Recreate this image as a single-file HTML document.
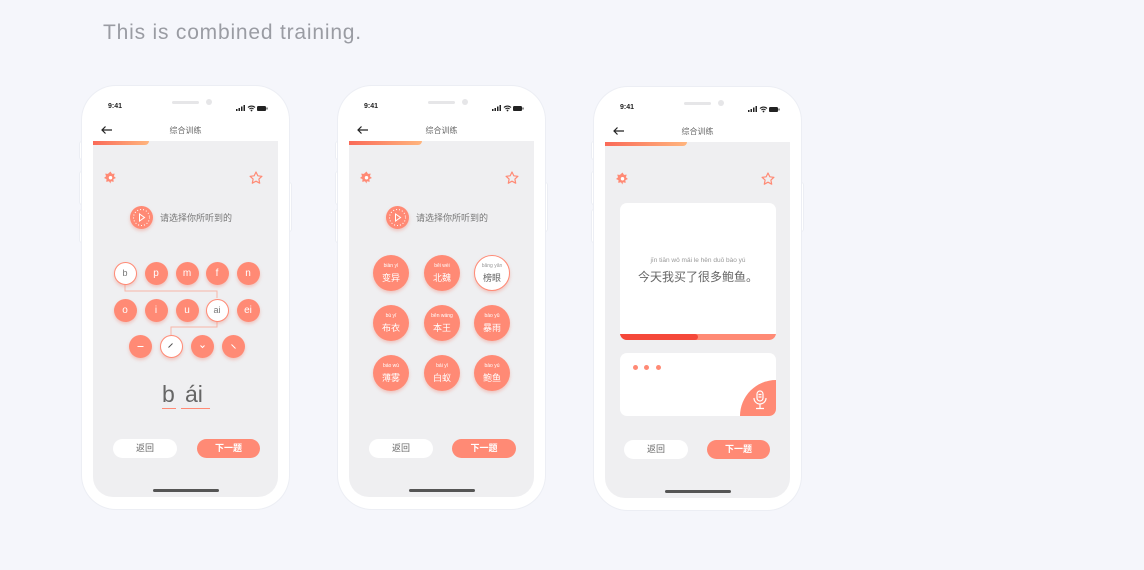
<!DOCTYPE html>
<html><head><meta charset="utf-8"><style>
*{margin:0;padding:0;box-sizing:border-box}
body{width:1144px;height:570px;background:#f5f6fb;font-family:"Liberation Sans","Noto Sans CJK SC",sans-serif;position:relative;overflow:hidden}
.h{position:absolute;left:103px;top:21px;font-size:21px;color:#9a9ca3;letter-spacing:.8px}
.ph{position:absolute;top:86px;width:207px;height:423px;background:#fff;border-radius:34px;box-shadow:0 0 0 1px #eceef4}
.sb{position:absolute;background:#fff;border-radius:2px;box-shadow:0 0 0 1px #eceef4}
.ph *{position:absolute}
.scr{left:11px;top:55px;width:185px;height:356px;background:#efeff1;border-radius:0 0 20px 20px;overflow:hidden}
.t{left:26px;top:17px;font-size:7px;font-weight:bold;color:#222}
.pill{left:90px;top:15px;width:27px;height:3px;border-radius:2px;background:#e6e6e8}
.dot{left:124px;top:13px;width:6px;height:6px;border-radius:3px;background:#e6e6e8}
.title{left:0;width:207px;text-align:center;top:39px;font-size:8px;color:#666}
.prog{left:0;top:0;width:56px;height:4px;border-radius:0 0 4px 0;background:linear-gradient(90deg,#fa6a58,#ffb57e)}
.c{border-radius:50%;background:#ff8a75;color:#fff;text-align:center;box-shadow:0 2px 3px rgba(240,120,100,.35)}
.s{width:23px;height:23px;font-size:10px;line-height:23px}
.c.w{background:#fff;color:#777;border:1.5px solid #ff8a75}
.s.w{line-height:20px;font-size:9px}
.btn{height:19px;border-radius:10px;font-size:9px;text-align:center;line-height:19px}
.home{left:71px;top:403px;width:66px;height:2.5px;border-radius:2px;background:#555}
.py{left:0;width:100%;top:8px;font-size:5px}
.hz{left:0;width:100%;top:16px;font-size:9px}
</style></head><body>
<div class="h">This is combined training.</div>

<div class="sb" style="left:80px;top:142px;width:4px;height:17px"></div>
<div class="sb" style="left:80px;top:172px;width:4px;height:32px"></div>
<div class="sb" style="left:80px;top:210px;width:4px;height:32px"></div>
<div class="sb" style="left:287px;top:183px;width:4px;height:48px"></div>
<div class="sb" style="left:336px;top:142px;width:4px;height:17px"></div>
<div class="sb" style="left:336px;top:172px;width:4px;height:32px"></div>
<div class="sb" style="left:336px;top:210px;width:4px;height:32px"></div>
<div class="sb" style="left:543px;top:183px;width:4px;height:48px"></div>
<div class="sb" style="left:592px;top:142px;width:4px;height:17px"></div>
<div class="sb" style="left:592px;top:172px;width:4px;height:32px"></div>
<div class="sb" style="left:592px;top:210px;width:4px;height:32px"></div>
<div class="sb" style="left:799px;top:183px;width:4px;height:48px"></div>

<!-- PHONE 1 -->
<div class="ph" style="left:82px">
<div class="t">9:41</div><div class="pill"></div><div class="dot"></div>
<svg style="left:154px;top:18px" width="33" height="8" viewBox="0 0 33 8"><rect x="0" y="5" width="1.5" height="2" fill="#222"/><rect x="2.5" y="4" width="1.5" height="3" fill="#222"/><rect x="5" y="2.5" width="1.5" height="4.5" fill="#222"/><rect x="7.5" y="1" width="1.5" height="6" fill="#222"/><path d="M12 3.5a5 5 0 0 1 7 0M13.5 5a3 3 0 0 1 4 0" stroke="#222" stroke-width="1.2" fill="none"/><circle cx="15.5" cy="6.5" r=".9" fill="#222"/><rect x="21" y="2" width="9" height="5" rx="1.3" fill="#222"/><rect x="30.5" y="3.5" width="1" height="2" fill="#222"/></svg>
<svg style="left:19px;top:40px" width="11" height="8"><path d="M1 4h10M4.5 .5L1 4l3.5 3.5" stroke="#222" stroke-width="1.2" fill="none"/></svg>
<div class="title">综合训练</div>
<div class="scr">
<div class="prog"></div>
<svg style="left:11px;top:30px" width="13" height="13" viewBox="0 0 12 12"><path d="M6 0.5l1.4 2.1 2.5-.2-.8 2.4L11 6.5l-2.3 1 .2 2.5-2.5-.5L6 11.5l-1.4-2-2.5.5.2-2.5L0 6.5l1.9-1.7-.8-2.4 2.5.2z" fill="#ff8a75"/><circle cx="6" cy="6.2" r="1.6" fill="#fff"/></svg>
<svg style="left:156px;top:30px" width="14" height="14" viewBox="0 0 14 14"><path d="M7 1l1.8 3.8 4.1.5-3 2.8.8 4.1L7 10.2 3.3 12.2l.8-4.1-3-2.8 4.1-.5z" stroke="#ff8a75" stroke-width="1.2" fill="none" stroke-linejoin="round"/></svg>
<div class="c" style="left:37px;top:65px;width:23px;height:23px"></div>
<svg style="left:37px;top:65px" width="23" height="23" viewBox="0 0 23 23"><circle cx="11.5" cy="11.5" r="8" stroke="#fff" stroke-width="1" stroke-dasharray="1 2" fill="none"/><path d="M9.5 8l5 3.5-5 3.5z" stroke="#fff" fill="none"/></svg>
<div style="left:67px;top:70px;font-size:9px;color:#777;white-space:nowrap">请选择你所听到的</div>
<svg style="left:0;top:0" width="185" height="300"><path d="M32 143V150H124V157M124 180V186H78V194" stroke="#f7b6a8" stroke-width="1" fill="none"/></svg>
<div class="c s w" style="left:20.5px;top:120.5px">b</div>
<div class="c s" style="left:51.5px;top:120.5px">p</div>
<div class="c s" style="left:82.5px;top:120.5px">m</div>
<div class="c s" style="left:112.5px;top:120.5px">f</div>
<div class="c s" style="left:143.5px;top:120.5px">n</div>
<div class="c s" style="left:20.5px;top:157.5px">o</div>
<div class="c s" style="left:51.5px;top:157.5px">i</div>
<div class="c s" style="left:82.5px;top:157.5px">u</div>
<div class="c s w" style="left:112.5px;top:157.5px">ai</div>
<div class="c s" style="left:143.5px;top:157.5px">ei</div>
<div class="c s" style="left:35.5px;top:193.5px"><svg style="left:0;top:0" width="23" height="23"><path d="M8.5 11.5h6" stroke="#fff" stroke-width="1"/></svg></div>
<div class="c s w" style="left:66.5px;top:193.5px"><svg style="left:-1.5px;top:-1.5px" width="23" height="23"><path d="M9.5 13.5l4-4" stroke="#555" stroke-width="1"/></svg></div>
<div class="c s" style="left:97.5px;top:193.5px"><svg style="left:0;top:0" width="23" height="23"><path d="M9.5 10.5l2 2 2-2" stroke="#fff" stroke-width="1" fill="none"/></svg></div>
<div class="c s" style="left:128.5px;top:193.5px"><svg style="left:0;top:0" width="23" height="23"><path d="M9.5 9.5l4 4" stroke="#fff" stroke-width="1"/></svg></div>
<div style="left:69px;top:240px;font-size:23px;color:#666">b</div>
<div style="left:92px;top:240px;font-size:23px;color:#666">ái</div>
<div style="left:69px;top:267px;width:14px;height:1px;background:#ff8a75"></div>
<div style="left:88px;top:267px;width:29px;height:1px;background:#ff8a75"></div>
<div class="btn" style="left:20px;top:298px;width:64px;background:#fff;color:#666">返回</div>
<div class="btn" style="left:104px;top:298px;width:63px;background:#ff8a75;color:#fff;font-weight:bold">下一题</div>
</div>
<div class="home"></div>
</div>

<!-- PHONE 2 -->
<div class="ph" style="left:338px">
<div class="t">9:41</div><div class="pill"></div><div class="dot"></div>
<svg style="left:154px;top:18px" width="33" height="8" viewBox="0 0 33 8"><rect x="0" y="5" width="1.5" height="2" fill="#222"/><rect x="2.5" y="4" width="1.5" height="3" fill="#222"/><rect x="5" y="2.5" width="1.5" height="4.5" fill="#222"/><rect x="7.5" y="1" width="1.5" height="6" fill="#222"/><path d="M12 3.5a5 5 0 0 1 7 0M13.5 5a3 3 0 0 1 4 0" stroke="#222" stroke-width="1.2" fill="none"/><circle cx="15.5" cy="6.5" r=".9" fill="#222"/><rect x="21" y="2" width="9" height="5" rx="1.3" fill="#222"/><rect x="30.5" y="3.5" width="1" height="2" fill="#222"/></svg>
<svg style="left:19px;top:40px" width="11" height="8"><path d="M1 4h10M4.5 .5L1 4l3.5 3.5" stroke="#222" stroke-width="1.2" fill="none"/></svg>
<div class="title">综合训练</div>
<div class="scr">
<div class="prog" style="width:73px"></div>
<svg style="left:11px;top:30px" width="13" height="13" viewBox="0 0 12 12"><path d="M6 0.5l1.4 2.1 2.5-.2-.8 2.4L11 6.5l-2.3 1 .2 2.5-2.5-.5L6 11.5l-1.4-2-2.5.5.2-2.5L0 6.5l1.9-1.7-.8-2.4 2.5.2z" fill="#ff8a75"/><circle cx="6" cy="6.2" r="1.6" fill="#fff"/></svg>
<svg style="left:156px;top:30px" width="14" height="14" viewBox="0 0 14 14"><path d="M7 1l1.8 3.8 4.1.5-3 2.8.8 4.1L7 10.2 3.3 12.2l.8-4.1-3-2.8 4.1-.5z" stroke="#ff8a75" stroke-width="1.2" fill="none" stroke-linejoin="round"/></svg>
<div class="c" style="left:37px;top:65px;width:23px;height:23px"></div>
<svg style="left:37px;top:65px" width="23" height="23" viewBox="0 0 23 23"><circle cx="11.5" cy="11.5" r="8" stroke="#fff" stroke-width="1" stroke-dasharray="1 2" fill="none"/><path d="M9.5 8l5 3.5-5 3.5z" stroke="#fff" fill="none"/></svg>
<div style="left:67px;top:70px;font-size:9px;color:#777;white-space:nowrap">请选择你所听到的</div>
<div class="c" style="left:24px;top:114px;width:36px;height:36px"><div class="py">biàn yì</div><div class="hz">变异</div></div>
<div class="c" style="left:75px;top:114px;width:36px;height:36px"><div class="py">běi wèi</div><div class="hz">北魏</div></div>
<div class="c w" style="left:125px;top:114px;width:36px;height:36px"><div class="py" style="top:6.5px;color:#999">bǎng yǎn</div><div class="hz" style="top:14.5px;color:#666">榜眼</div></div>
<div class="c" style="left:24px;top:164px;width:36px;height:36px"><div class="py">bù yī</div><div class="hz">布衣</div></div>
<div class="c" style="left:75px;top:164px;width:36px;height:36px"><div class="py">běn wáng</div><div class="hz">本王</div></div>
<div class="c" style="left:125px;top:164px;width:36px;height:36px"><div class="py">bào yǔ</div><div class="hz">暴雨</div></div>
<div class="c" style="left:24px;top:214px;width:36px;height:36px"><div class="py">báo wù</div><div class="hz">薄雾</div></div>
<div class="c" style="left:75px;top:214px;width:36px;height:36px"><div class="py">bái yǐ</div><div class="hz">白蚁</div></div>
<div class="c" style="left:125px;top:214px;width:36px;height:36px"><div class="py">bào yú</div><div class="hz">鲍鱼</div></div>
<div class="btn" style="left:20px;top:298px;width:64px;background:#fff;color:#666">返回</div>
<div class="btn" style="left:103px;top:298px;width:64px;background:#ff8a75;color:#fff;font-weight:bold">下一题</div>
</div>
<div class="home"></div>
</div>

<!-- PHONE 3 -->
<div class="ph" style="left:594px;top:87px">
<div class="t">9:41</div><div class="pill"></div><div class="dot"></div>
<svg style="left:154px;top:18px" width="33" height="8" viewBox="0 0 33 8"><rect x="0" y="5" width="1.5" height="2" fill="#222"/><rect x="2.5" y="4" width="1.5" height="3" fill="#222"/><rect x="5" y="2.5" width="1.5" height="4.5" fill="#222"/><rect x="7.5" y="1" width="1.5" height="6" fill="#222"/><path d="M12 3.5a5 5 0 0 1 7 0M13.5 5a3 3 0 0 1 4 0" stroke="#222" stroke-width="1.2" fill="none"/><circle cx="15.5" cy="6.5" r=".9" fill="#222"/><rect x="21" y="2" width="9" height="5" rx="1.3" fill="#222"/><rect x="30.5" y="3.5" width="1" height="2" fill="#222"/></svg>
<svg style="left:19px;top:40px" width="11" height="8"><path d="M1 4h10M4.5 .5L1 4l3.5 3.5" stroke="#222" stroke-width="1.2" fill="none"/></svg>
<div class="title">综合训练</div>
<div class="scr">
<div class="prog" style="width:82px"></div>
<svg style="left:11px;top:30px" width="13" height="13" viewBox="0 0 12 12"><path d="M6 0.5l1.4 2.1 2.5-.2-.8 2.4L11 6.5l-2.3 1 .2 2.5-2.5-.5L6 11.5l-1.4-2-2.5.5.2-2.5L0 6.5l1.9-1.7-.8-2.4 2.5.2z" fill="#ff8a75"/><circle cx="6" cy="6.2" r="1.6" fill="#fff"/></svg>
<svg style="left:156px;top:30px" width="14" height="14" viewBox="0 0 14 14"><path d="M7 1l1.8 3.8 4.1.5-3 2.8.8 4.1L7 10.2 3.3 12.2l.8-4.1-3-2.8 4.1-.5z" stroke="#ff8a75" stroke-width="1.2" fill="none" stroke-linejoin="round"/></svg>
<div style="left:15px;top:61px;width:156px;height:137px;background:#fff;border-radius:7px;overflow:hidden">
<div style="left:0;width:156px;top:54px;text-align:center;font-size:6.5px;color:#999">jīn tiān wǒ mǎi le hěn duō bào yú</div>
<div style="left:0;width:156px;top:65px;text-align:center;font-size:12px;color:#666">今天我买了很多鲍鱼。</div>
<div style="left:0;top:131px;width:156px;height:6px;background:#ff8a75"></div>
<div style="left:0;top:131px;width:78px;height:6px;background:#f5483a;border-radius:0 3px 3px 0"></div>
</div>
<div style="left:15px;top:211px;width:156px;height:63px;background:#fff;border-radius:7px;overflow:hidden">
<div style="left:13px;top:12px;width:5px;height:5px;border-radius:50%;background:#ff8a75"></div>
<div style="left:24px;top:12px;width:5px;height:5px;border-radius:50%;background:#ff8a75"></div>
<div style="left:36px;top:12px;width:5px;height:5px;border-radius:50%;background:#ff8a75"></div>
<div style="left:120px;top:27px;width:72px;height:72px;border-radius:50%;background:#ff8a75"></div>
<svg style="left:131px;top:37px" width="18" height="20" viewBox="0 0 18 20"><rect x="6" y="1" width="6" height="10" rx="3" stroke="#fff" fill="none" stroke-width="1.2"/><path d="M3 8a6 6 0 0 0 12 0M9 14v4M5 18.5h8M7.5 4.5h3M7.5 7h3" stroke="#fff" fill="none" stroke-width="1.2"/></svg>
</div>
<div class="btn" style="left:19px;top:298px;width:64px;background:#fff;color:#666">返回</div>
<div class="btn" style="left:102px;top:298px;width:63px;background:#ff8a75;color:#fff;font-weight:bold">下一题</div>
</div>
<div class="home"></div>
</div>
</body></html>
